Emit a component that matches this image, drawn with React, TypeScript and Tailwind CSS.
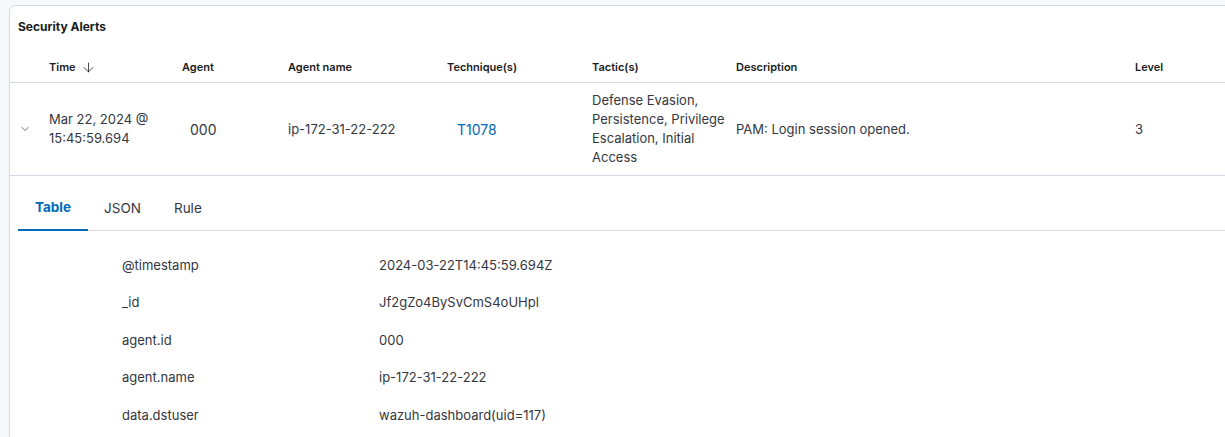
import React from "react";
import { ArrowDown, ChevronDown } from "lucide-react";

const fields: [string, string][] = [
  ["@timestamp", "2024-03-22T14:45:59.694Z"],
  ["_id", "Jf2gZo4BySvCmS4oUHpl"],
  ["agent.id", "000"],
  ["agent.name", "ip-172-31-22-222"],
  ["data.dstuser", "wazuh-dashboard(uid=117)"],
];

export default function App() {
  return (
    <div
      className="w-[1225px] h-[437px] overflow-hidden bg-[#f7f8fc] pt-[5px] pl-[9px]"
      style={{ fontFamily: "Inter, 'Noto Sans', sans-serif" }}
    >
      <div className="w-[1240px] h-[440px] bg-white border border-[#d3dae6] rounded-tl-[6px]">
        {/* Title */}
        <div className="h-[41px] flex items-center pl-[8px] text-[12px] font-bold text-[#1a1c21]">
          Security Alerts
        </div>
        {/* Header row */}
        <div className="h-[36px] flex items-center pt-[5px] border-b border-[#d3dae6] text-[11px] font-semibold text-[#1a1c21]">
          <div className="w-[39px]" />
          <div className="w-[133px] flex items-center gap-[5px]">
            Time
            <ArrowDown size={15} strokeWidth={1.3} />
          </div>
          <div className="w-[106px]">Agent</div>
          <div className="w-[159px]">Agent name</div>
          <div className="w-[145px]">Technique(s)</div>
          <div className="w-[144px]">Tactic(s)</div>
          <div className="w-[399px]">Description</div>
          <div>Level</div>
        </div>
        {/* Data row */}
        <div className="flex items-center py-[8px] border-b border-[#d3dae6] text-[13px] leading-[19px] text-[#343741]">
          <div className="w-[39px] flex justify-center pr-[10px]">
            <ChevronDown size={12} strokeWidth={1.5} className="text-[#343741]" />
          </div>
          <div className="w-[133px]">
            Mar 22, 2024 @
            <br />
            15:45:59.694
          </div>
          <div className="w-[106px] pl-[8px] text-[14px]">000</div>
          <div className="w-[159px]">ip-172-31-22-222</div>
          <div className="w-[145px] pl-[10px] text-[14px] text-[#006bb8]">T1078</div>
          <div className="w-[144px] pr-[8px]">
            Defense Evasion, Persistence, Privilege Escalation, Initial Access
          </div>
          <div className="w-[399px]">PAM: Login session opened.</div>
          <div>3</div>
        </div>
        {/* Expanded */}
        <div className="pl-[8px] pt-[8px]">
          <div className="flex border-b border-[#d3dae6] h-[47px] text-[13.5px]">
            <div className="px-[17px] h-[47px] flex items-center pt-[1px] font-bold text-[#006bb8] border-b-2 border-[#006bb8] -mb-[1px]">
              Table
            </div>
            <div className="pl-[16px] pr-[17px] h-[47px] flex items-center pt-[1px] text-[#343741]">JSON</div>
            <div className="px-[16px] h-[47px] flex items-center pt-[1px] text-[#343741]">Rule</div>
          </div>
          <div className="pt-[16px] text-[13px] text-[#343741]">
            {fields.map(([k, v]) => (
              <div key={k} className="h-[37.4px] flex items-center">
                <div className="w-[361px] pl-[104px]">{k}</div>
                <div>{v}</div>
              </div>
            ))}
          </div>
        </div>
      </div>
    </div>
  );
}
